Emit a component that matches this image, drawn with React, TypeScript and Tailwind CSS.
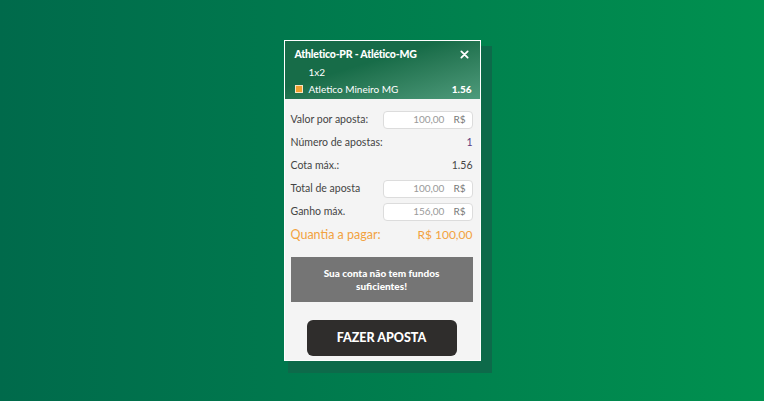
import React from 'react';

interface RowProps {
  label: string;
  value?: string;
  input?: boolean;
  valueClass?: string;
}

const Row: React.FC<RowProps> = ({ label, value, input, valueClass = 'text-[#444]' }) => (
  <div className="flex h-[23px] items-center justify-between">
    <span className="text-[10.5px] text-[#444]">{label}</span>
    {input ? (
      <div className="flex h-[18px] w-[90px] items-center justify-end gap-[9px] rounded-[4px] border border-[#dcdcdc] bg-white pr-[6px] text-[10px]">
        <span className="text-[#9a9a9a]">{value}</span>
        <span className="text-[#777]">R$</span>
      </div>
    ) : (
      <span className={`text-[10.5px] ${valueClass}`}>{value}</span>
    )}
  </div>
);

export default function App() {
  return (
    <div
      className="flex h-[401px] w-[764px] justify-center bg-gradient-to-r from-[#006a4b] to-[#00914f] pt-[40px]"
      style={{ fontFamily: 'Lato, "Noto Sans", sans-serif' }}
    >
      <div className="relative h-[321px] w-[197px]">
        {/* shadow */}
        <div className="absolute left-[4px] top-[6px] h-[327px] w-[204px] bg-[#0d6a4a]" />
        <div className="relative flex h-full w-full flex-col border border-white bg-[#f4f4f4]">
          <div className="h-[58px] bg-gradient-to-br from-[#176c48] from-40% to-[#4e9b7c] px-[10px] pt-[6px] text-white">
            <div className="flex items-center justify-between">
              <span className="text-[10.5px] font-black tracking-[-0.2px]">Athletico-PR - Atlético-MG</span>
              <svg width="9" height="9" viewBox="0 0 10 10" className="mr-[1px]">
                <path d="M1.5 1.5 L8.5 8.5 M8.5 1.5 L1.5 8.5" stroke="white" strokeWidth="2" strokeLinecap="round" />
              </svg>
            </div>
            <div className="mt-[2px] pl-[14px] text-[10px]">1x2</div>
            <div className="mt-[2px] flex items-center justify-between">
              <div className="flex items-center gap-[6px]">
                <span className="h-[8px] w-[8px] border border-white/70 bg-[#f0a030]" />
                <span className="text-[10px]">Atletico Mineiro MG</span>
              </div>
              <span className="mr-[-2px] text-[10px] font-black">1.56</span>
            </div>
          </div>
          <div className="px-[6px] pt-[9px] pr-[7px]">
            <Row label="Valor por aposta:" value="100,00" input />
            <Row label="Número de apostas:" value="1" valueClass="text-[#5b3b7d]" />
            <Row label="Cota máx.:" value="1.56" />
            <Row label="Total de aposta" value="100,00" input />
            <Row label="Ganho máx." value="156,00" input />
            <div className="flex h-[24px] items-center justify-between text-[#f2a23f]">
              <span className="text-[12.5px]">Quantia a pagar:</span>
              <span className="text-[12px]">R$ 100,00</span>
            </div>
            <div className="mt-[10px] flex h-[45px] flex-col items-center justify-center bg-[#757575] text-center text-[10px] font-black leading-[13px] text-white">
              <span>Sua conta não tem fundos</span>
              <span>suficientes!</span>
            </div>
            <div className="mt-[18px] flex justify-center">
              <button className="flex h-[36px] w-[150px] items-center justify-center rounded-[6px] bg-[#2f2d2c] text-[12.5px] font-black text-white">
                FAZER APOSTA
              </button>
            </div>
          </div>
        </div>
      </div>
    </div>
  );
}
